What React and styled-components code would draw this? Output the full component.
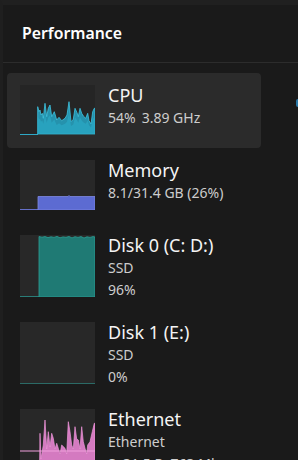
import React from 'react'
import styled, { createGlobalStyle } from 'styled-components'

const GlobalStyle = createGlobalStyle`
    html, body {
        margin: 0;
        padding: 0;
        background: #1a1a1a;
        overflow: hidden;
    }
    * {
        box-sizing: border-box;
    }
`

const Window = styled.div`
    width: 298px;
    height: 460px;
    display: flex;
    flex-direction: column;
    background: #1a1a1a;
    border-left: 3px solid #1f1f1f;
    border-top: 5px solid #202020;
    font-family: "Noto Sans", "Open Sans", sans-serif;
    overflow: hidden;
`

const Header = styled.header`
    height: 58px;
    flex-shrink: 0;
    display: flex;
    align-items: center;
    padding-left: 19px;
    padding-bottom: 2px;
    border-bottom: 1px solid #2c2c2c;
    color: #ffffff;
    font-size: 15.8px;
    font-weight: 600;
`

const Body = styled.div`
    display: flex;
    flex: 1;
    min-height: 0;
`

const List = styled.div`
    width: 293px;
    flex-shrink: 0;
    display: flex;
    flex-direction: column;
    padding: 10px 0 0 4px;
`

// the row height follows the graph: 12px above, 13px below
const Item = styled.div`
    width: 254px;
    height: ${p => p.$h + 25}px;
    flex-shrink: 0;
    display: flex;
    align-items: flex-start;
    gap: 13px;
    padding: 12px 13px 13px;
    border-radius: 4px;
    background: ${p => (p.$selected ? '#2b2b2b' : 'transparent')};
`

const Graph = styled.svg`
    display: block;
    width: 75px;
    height: ${p => p.$h}px;
    flex-shrink: 0;
    background: ${p => (p.$selected ? '#252525' : '#282828')};
`

const Info = styled.div`
    display: flex;
    flex-direction: column;
    min-width: 0;
    margin-top: -1px;
`

const Title = styled.div`
    color: #f4f4f4;
    font-size: 18px;
    line-height: 23px;
    white-space: nowrap;
`

const Sub = styled.div`
    display: flex;
    gap: ${p => p.$gap || 0}px;
    color: #cdcdcd;
    font-size: 14px;
    line-height: 22px;
    white-space: nowrap;
`

const RightPane = styled.div`
    flex: 1;
    padding-top: 36px;
`

const Blip = styled.div`
    width: 3px;
    height: 8px;
    border-radius: 2px 0 0 2px;
    background: #2a78a6;
`

const cpuPts = [
    [17.7, 49], [17.7, 21.7], [19, 26.7], [20, 25], [21, 30], [22.3, 28.3], [23.3, 33.3],
    [25, 18.3], [26.7, 31.7], [28.3, 23.3], [30, 20], [31.7, 31.7], [34.3, 26.7],
    [36.7, 35], [39, 32.3], [41.7, 35.7], [45, 33.3], [47, 30], [49, 16.7], [51, 36.7],
    [53.3, 34.3], [55, 23.3], [57, 27.7], [58.3, 31.7], [60, 23.3], [61.7, 28.3],
    [63.3, 31], [65.7, 33.3], [67.7, 28.3], [69, 35.7], [71, 39], [72.7, 26.7],
    [74.3, 23.3], [75, 23.3], [75, 49],
]

const ethPts = [
    [19.5, 62], [20, 24.3], [21, 50], [23.3, 36], [25, 11], [26.7, 40], [28.3, 22.7],
    [30, 38], [31.7, 24.3], [33.3, 29.3], [35, 40], [36.7, 34.3], [38.3, 39.3],
    [40, 45], [41.7, 36], [45, 39.3], [46.7, 45], [48.3, 12.7], [50, 22.7], [51.7, 36],
    [53.3, 40], [55, 17.7], [56.7, 30], [58.3, 31], [60, 40], [61.7, 17.7], [63.3, 32.7],
    [65, 39.3], [66.7, 45], [67.7, 36], [70, 32.7], [72.3, 22.7], [74.3, 14.3],
    [75, 14.3], [75, 62],
]

const diskPts = [
    [19, 62], [19, 1.5], [22, 2.2], [25, 1.6], [28, 2.6], [31, 1.8], [34, 2.4], [37, 1.4],
    [40, 2.8], [43, 1.9], [46, 2.3], [49, 1.5], [52, 2.9], [55, 1.7], [58, 2.4],
    [61, 1.6], [64, 3], [67, 1.8], [70, 2.4], [73, 1.6], [75, 2], [75, 62],
]

const toPoints = pts => pts.map(p => p.join(',')).join(' ')

const CpuGraph = () => (
    <Graph $h={50} $selected viewBox="0 0 75 50" preserveAspectRatio="none">
        <line x1="0" y1="49.5" x2="18" y2="49.5" stroke="#2ea8c6" strokeWidth="1" />
        <polygon points={toPoints(cpuPts)} fill="#2592ad" stroke="#3ec3e0" strokeWidth="0.8" />
        <polygon
            points={toPoints(cpuPts.map(([x, y]) => [x, y + (49 - y) * 0.35]))}
            fill="#2aa9c5"
            opacity="0.7"
        />
    </Graph>
)

const MemGraph = () => (
    <Graph $h={50} viewBox="0 0 75 50" preserveAspectRatio="none">
        <line x1="0" y1="49.5" x2="18" y2="49.5" stroke="#6570c9" strokeWidth="1" />
        <polygon
            points="18,50 18,36.5 48,36.5 49,35.5 50,36.5 75,36.5 75,50"
            fill="#5c6bd2"
            stroke="#7d88e2"
            strokeWidth="0.8"
        />
    </Graph>
)

const Disk0Graph = () => (
    <Graph $h={62} viewBox="0 0 75 62" preserveAspectRatio="none">
        <line x1="0" y1="61.5" x2="19" y2="61.5" stroke="#2a7d78" strokeWidth="1" />
        <polygon points={toPoints(diskPts)} fill="#1f7a74" stroke="#2ba197" strokeWidth="0.8" />
    </Graph>
)

const Disk1Graph = () => (
    <Graph $h={62} viewBox="0 0 75 62" preserveAspectRatio="none">
        <line x1="0" y1="61.5" x2="75" y2="61.5" stroke="#2b6a66" strokeWidth="1" />
    </Graph>
)

const EthGraph = () => (
    <Graph $h={62} viewBox="0 0 75 62" preserveAspectRatio="none">
        <polygon points={toPoints(ethPts)} fill="#d47ac0" stroke="#ee95da" strokeWidth="0.7" />
        <line x1="0" y1="42" x2="75" y2="42" stroke="#f0a0dc" strokeWidth="1" />
    </Graph>
)

const App = () => {
    return (
        <>
            <GlobalStyle />
            <Window>
                <Header>Performance</Header>
                <Body>
                    <List>
                        <Item $selected $h={50}>
                            <CpuGraph />
                            <Info>
                                <Title>CPU</Title>
                                <Sub $gap={6}>
                                    <span>54%</span>
                                    <span>3.89 GHz</span>
                                </Sub>
                            </Info>
                        </Item>
                        <Item $h={50}>
                            <MemGraph />
                            <Info>
                                <Title>Memory</Title>
                                <Sub>8.1/31.4 GB (26%)</Sub>
                            </Info>
                        </Item>
                        <Item $h={62}>
                            <Disk0Graph />
                            <Info>
                                <Title>Disk 0 (C: D:)</Title>
                                <Sub>SSD</Sub>
                                <Sub>96%</Sub>
                            </Info>
                        </Item>
                        <Item $h={62}>
                            <Disk1Graph />
                            <Info>
                                <Title>Disk 1 (E:)</Title>
                                <Sub>SSD</Sub>
                                <Sub>0%</Sub>
                            </Info>
                        </Item>
                        <Item $h={62}>
                            <EthGraph />
                            <Info>
                                <Title>Ethernet</Title>
                                <Sub>Ethernet</Sub>
                                <Sub>S: 31.5 R: 763 Mbps</Sub>
                            </Info>
                        </Item>
                    </List>
                    <RightPane>
                        <Blip />
                    </RightPane>
                </Body>
            </Window>
        </>
    )
}

export default App
